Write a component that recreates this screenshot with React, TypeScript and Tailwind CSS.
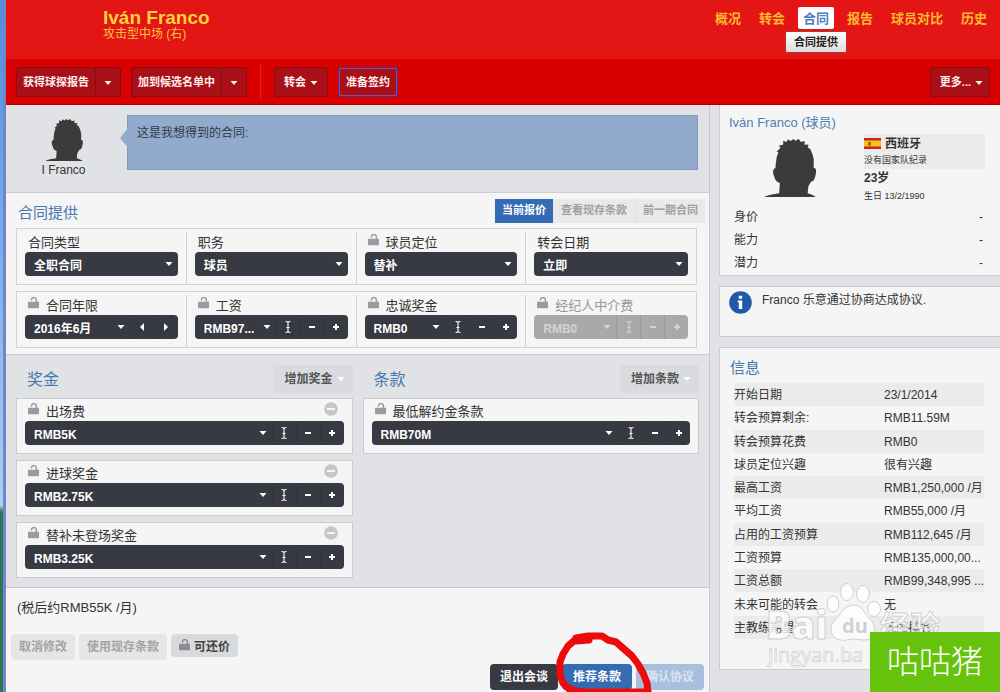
import { useId } from "react";
import type { ReactNode } from "react";
import clsx from "clsx";

const navItems = ["概况", "转会", "合同", "报告", "球员对比", "历史"];

const bonuses = [
  { label: "出场费", value: "RMB5K" },
  { label: "进球奖金", value: "RMB2.75K" },
  { label: "替补未登场奖金", value: "RMB3.25K" },
];

const ratings = ["身价", "能力", "潜力"];

const infoRows = [
  ["开始日期", "23/1/2014"],
  ["转会预算剩余:", "RMB11.59M"],
  ["转会预算花费", "RMB0"],
  ["球员定位兴趣", "很有兴趣"],
  ["最高工资", "RMB1,250,000 /月"],
  ["平均工资", "RMB55,000 /月"],
  ["占用的工资预算", "RMB112,645 /月"],
  ["工资预算", "RMB135,000,00..."],
  ["工资总额", "RMB99,348,995 ..."],
  ["未来可能的转会", "无"],
  ["主教练期望", "巩固排名"],
];

function Caret({ className }: { className?: string }) {
  return (
    <svg viewBox="0 0 8 4" className={clsx("h-1 w-2 shrink-0 fill-current", className)} aria-hidden="true">
      <path d="M0.5 0h7L4 4z" />
    </svg>
  );
}

function LockIcon({ className }: { className?: string }) {
  return (
    <svg viewBox="0 0 11 12" className={clsx("h-3 w-[11px] shrink-0", className)} aria-hidden="true">
      <path d="M0 4.8h11v5.6a.8.8 0 0 1-.8.8H.8a.8.8 0 0 1-.8-.8z" fill="currentColor" />
      <path d="M8.4 5.5V3.2a2.5 2.5 0 0 0-5-.2v.6" fill="none" stroke="currentColor" strokeWidth="1.5" />
    </svg>
  );
}

function Silhouette({ className }: { className?: string }) {
  return (
    <svg viewBox="0 0 152 171" className={className} fill="#3b3b3b" aria-hidden="true">
      <path d="M0 171C10 165 28 163 44 160L46 130C38 128 32 122 30 112C24 100 25 86 33 86C34 70 36 60 37 52L42 38L36 38L48 26L43 20L56 16L56 5L66 9L70 1L78 6L86 0L92 5L102 0L107 8L120 7L118 16L131 17L128 24L136 30L142 44L146 60L146 86C154 84 154 96 151 108C148 122 144 124 138 126L130 140L128 160C136 163 146 166 152 171Z" />
    </svg>
  );
}

function StepIcon({ kind }: { kind: string }) {
  return (
    <svg viewBox="0 0 12 14" className="h-3.5 w-3 fill-current" aria-hidden="true">
      {kind === "edit" && (
        <path d="M3.5 1.5q2 0 2.5 1q.5-1 2.5-1M6 2.5v9M3.5 12.5q2 0 2.5-1q.5 1 2.5 1M4.5 7.5h3" fill="none" stroke="currentColor" strokeWidth="1.1" />
      )}
      {kind === "minus" && <path d="M3 6h6v2H3z" />}
      {kind === "plus" && <path d="M3 6h2V4h2v2h2v2H7v2H5V8H3z" />}
      {kind === "prev" && <path d="M8 3v8L4 7z" />}
      {kind === "next" && <path d="M4 3v8l4-4z" />}
    </svg>
  );
}

const stepNames: Record<string, string> = {
  edit: "编辑",
  minus: "减少",
  plus: "增加",
  prev: "上一个",
  next: "下一个",
};

const moneySteps = ["edit", "minus", "plus"];

type FieldProps = {
  label: string;
  value: string;
  steps?: string[];
  locked?: boolean;
  disabled?: boolean;
  removable?: boolean;
};

function Field({ label, value, steps = [], locked, disabled, removable }: FieldProps) {
  const id = useId();

  return (
    <div className="min-w-0 px-2 pb-2">
      <div className="flex h-5 items-center gap-[7px] pl-[3px]">
        {locked && <LockIcon className="-mt-1 text-[#9b9b9d]" />}
        <label htmlFor={id} className={clsx("pt-0.5 text-[13px]", disabled ? "text-[#999]" : "text-[#333]")}>
          {label}
        </label>
        {removable && (
          <button type="button" aria-label={`删除${label}`} className="-mt-1 mr-1.5 ml-auto">
            <svg viewBox="0 0 14 14" className="size-3.5">
              <circle cx="7" cy="7" r="6.8" fill="#c6c6c7" />
              <path d="M3 6h8v2H3z" fill="#f5f5f5" />
            </svg>
          </button>
        )}
      </div>
      <div className={clsx("flex h-6 overflow-hidden rounded", disabled ? "bg-[#a9a9aa] text-[#d3d3d3]" : "bg-[#383a43] text-white")}>
        <div className="relative min-w-0 flex-1">
          <select id={id} disabled={disabled} className="h-full w-full appearance-none bg-transparent pt-1 pl-[9px] text-xs font-bold">
            <option>{value}</option>
          </select>
          <Caret className="pointer-events-none absolute top-2.5 right-[5px]" />
        </div>
        {steps.map((step) => (
          <button
            key={step}
            type="button"
            disabled={disabled}
            aria-label={`${stepNames[step]}${label}`}
            className={clsx("flex w-6 items-center justify-center border-l", disabled ? "border-[#9b9b9c]" : "border-[#33353d]")}
          >
            <StepIcon kind={step} />
          </button>
        ))}
      </div>
    </div>
  );
}

function FieldRow({ children }: { children: ReactNode }) {
  return <div className="grid grid-cols-4 divide-x divide-[#d2d2d4] border border-[#d2d2d4] pt-[3px]">{children}</div>;
}

function FieldCard({ children }: { children: ReactNode }) {
  return <div className="border border-[#cbcccf] bg-[#f5f5f5] pt-0.5">{children}</div>;
}

function SectionHeader({ title, action }: { title: string; action: string }) {
  return (
    <div className="flex h-[43px] items-center justify-between pt-1 pl-[11px]">
      <h2 className="pt-0.5 text-base text-[#4577ae]">{title}</h2>
      <button type="button" className="flex h-7 items-center gap-1 rounded bg-[#d9dbde] pr-2 pl-[11px] text-xs font-bold text-[#555]">
        {action}
        <Caret className="text-white" />
      </button>
    </div>
  );
}

function Header() {
  return (
    <header className="flex h-[59px] items-start justify-between bg-[#e31515] pr-2 pl-[97px]">
      <div className="pt-2 text-[#ffd23a]">
        <h1 className="text-[19px] leading-5 font-bold">Iván Franco</h1>
        <p className="text-xs leading-3 text-[#ffc23a]">攻击型中场 (右)</p>
      </div>
      <nav className="pt-[7px]">
        <ul className="flex gap-2 text-[13px] font-bold text-[#ffb92e]">
          {navItems.map((item) => (
            <li key={item} className="relative">
              <a
                href="#"
                className={clsx("flex h-[22px] items-center px-[5px] pt-0.5", item === "合同" && "rounded-xs bg-white text-[#4a7fc0]")}
              >
                {item}
              </a>
              {item === "合同" && (
                <a
                  href="#"
                  className="absolute top-6 left-1/2 flex h-[22px] -translate-x-1/2 items-center rounded-xs border border-[#b33] bg-linear-to-b from-white to-[#dcdcdc] px-2 text-[11px] whitespace-nowrap text-[#222]"
                >
                  合同提供
                </a>
              )}
            </li>
          ))}
        </ul>
      </nav>
    </header>
  );
}

function SplitButton({ label }: { label: string }) {
  return (
    <div className="flex h-[30px] rounded-xs border border-[#8f0a10] bg-[#a80f16]">
      <button type="button" className="px-1.5 pt-0.5">{label}</button>
      <button type="button" aria-label={`${label}选项`} className="flex w-[25px] items-center justify-center border-l border-[#8f0a10] pt-0.5">
        <Caret />
      </button>
    </div>
  );
}

function Toolbar() {
  const button = "flex h-[30px] items-center gap-1 rounded-xs border bg-[#a80f16] pt-0.5";

  return (
    <div className="flex h-[46px] items-center border-b border-[#b50000] bg-[#d90000] px-2.5 text-[11px] font-bold text-[#fff0f0]">
      <div className="flex gap-2.5">
        <SplitButton label="获得球探报告" />
        <SplitButton label="加到候选名单中" />
      </div>
      <div className="mx-[13px] h-9 border-l border-[#e52020]" />
      <div className="flex gap-2.5">
        <button type="button" className={clsx(button, "border-[#8f0a10] px-[9px]")}>
          转会
          <Caret />
        </button>
        <button type="button" className={clsx(button, "border-[#5c2a86] px-[7px] ring-1 ring-[#8a4a96] ring-inset")}>
          准备签约
        </button>
      </div>
      <button type="button" className={clsx(button, "ml-auto border-[#8f0a10] pr-1.5 pl-[9px]")}>
        更多...
        <Caret />
      </button>
    </div>
  );
}

function Message() {
  return (
    <section className="flex h-[87px] items-start pt-2.5 pr-[11px]">
      <figure className="flex w-[115px] flex-col items-center pt-1">
        <Silhouette className="h-[42px] w-[38px]" />
        <figcaption className="pt-0.5 text-xs leading-3.5 text-[#333]">I Franco</figcaption>
      </figure>
      <div className="relative ml-1.5 h-[55px] flex-1 border border-[#8499ba] bg-[#92aacc]">
        <svg viewBox="0 0 8 20" className="absolute top-3 -left-2 h-5 w-2" fill="#92aacc" aria-hidden="true">
          <path d="M8 0v20L0 10z" />
        </svg>
        <p className="px-[9px] pt-2 text-xs leading-[18px] text-[#2f3a48]">这是我想得到的合同:</p>
      </div>
    </section>
  );
}

function ContractOffer() {
  return (
    <section className="border-y border-[#cdced1] bg-[#f5f5f5] pr-3 pb-1.5 pl-2.5">
      <div className="-mr-2 flex h-[35px] items-center justify-between">
        <h2 className="pt-1.5 pl-0.5 text-[15px] text-[#4577ae]">合同提供</h2>
        <div className="flex h-6 text-[11px] font-bold">
          <button type="button" className="bg-[#346cb4] px-[7px] text-white">当前报价</button>
          <button type="button" className="bg-[#e9e9ea] px-2 text-[#a0a0a2]">查看现存条款</button>
          <button type="button" className="border-l border-[#dfdfe1] bg-[#e9e9ea] px-[7px] text-[#a0a0a2]">前一期合同</button>
        </div>
      </div>
      <div className="flex flex-col gap-1.5">
        <FieldRow>
          <Field label="合同类型" value="全职合同" />
          <Field label="职务" value="球员" />
          <Field label="球员定位" value="替补" locked />
          <Field label="转会日期" value="立即" />
        </FieldRow>
        <FieldRow>
          <Field label="合同年限" value="2016年6月" steps={["prev", "next"]} locked />
          <Field label="工资" value="RMB97..." steps={moneySteps} locked />
          <Field label="忠诚奖金" value="RMB0" steps={moneySteps} locked />
          <Field label="经纪人中介费" value="RMB0" steps={moneySteps} locked disabled />
        </FieldRow>
      </div>
    </section>
  );
}

function Clauses() {
  return (
    <section className="grid grid-cols-2 gap-2.5 pr-2.5 pb-[9px] pl-2.5">
      <div>
        <SectionHeader title="奖金" action="增加奖金" />
        <div className="flex flex-col gap-1.5">
          {bonuses.map((bonus) => (
            <FieldCard key={bonus.label}>
              <Field {...bonus} steps={moneySteps} locked removable />
            </FieldCard>
          ))}
        </div>
      </div>
      <div>
        <SectionHeader title="条款" action="增加条款" />
        <FieldCard>
          <Field label="最低解约金条款" value="RMB70M" steps={moneySteps} locked />
        </FieldCard>
      </div>
    </section>
  );
}

function OfferActions() {
  return (
    <footer className="flex flex-1 flex-col border-t border-[#c9cacd] bg-[#f5f5f5] px-[5px] pt-2.5 pb-0.5">
      <p className="pl-1.5 text-[13px] leading-5 text-[#333]">(税后约RMB55K /月)</p>
      <div className="flex items-start gap-1 pt-4 text-xs font-bold text-[#a3a3a6]">
        <button type="button" className="h-[26px] rounded bg-[#e6e6e7] px-2">取消修改</button>
        <button type="button" className="h-[26px] rounded bg-[#e6e6e7] px-2">使用现存条款</button>
        <button type="button" className="flex h-[23px] items-center gap-1 rounded bg-[#d9dadd] px-2 text-[#444]">
          <LockIcon className="-mt-0.5 text-[#8d8d90]" />
          <span className="pt-0.5">可还价</span>
        </button>
      </div>
      <div className="mt-auto flex justify-end gap-1 text-xs font-bold text-white">
        <button type="button" className="h-[26px] rounded bg-[#383a43] px-2.5">退出会谈</button>
        <div className="relative z-10">
          <button type="button" className="h-[26px] rounded bg-[#346cb4] px-[11px]">推荐条款</button>
          <svg viewBox="0 0 98 61" className="pointer-events-none absolute -top-8 -left-1.5 h-[61px] w-[98px]" fill="none" stroke="#ec0a0a" strokeWidth="7" strokeLinecap="round" strokeLinejoin="round" aria-hidden="true">
            <path d="M33 8L20 9L20 6L32 4L46 4L52 8L60 10L68 17L76 24L82 32L87 41L91 51L92 61" />
            <path d="M19 8L12 14L7 22L4 30L4 43L7 51L13 57L24 60L92 60" />
          </svg>
        </div>
        <button type="button" className="h-[26px] rounded bg-[#a9bfde] px-2.5 text-[#dbe5f3]">确认协议</button>
      </div>
    </footer>
  );
}

function Flag() {
  return (
    <svg viewBox="0 0 17 11" className="h-[11px] w-[17px]" aria-hidden="true">
      <path d="M0 0h17v11H0z" fill="#c8281c" />
      <path d="M0 2.5h17v6H0z" fill="#f8c21c" />
      <path d="M4 4h3v3.5H4z" fill="#b5571c" />
    </svg>
  );
}

function PlayerCard() {
  return (
    <section className="border-b border-l border-[#cbcccf] bg-[#f5f5f5] pt-2 pr-[15px] pb-px pl-[9px]">
      <h2 className="text-[13px] leading-5 text-[#4c7db4]">Iván Franco (球员)</h2>
      <div className="flex pt-px">
        <div className="flex-1 pt-[5px] pl-[35px]">
          <Silhouette className="h-[58px] w-[52px]" />
        </div>
        <div className="w-[121px] text-[#333]">
          <div className="bg-[#ebebeb]">
            <p className="flex h-[18px] items-center gap-1 pt-px text-xs font-bold">
              <Flag />
              西班牙
            </p>
            <p className="text-[9px] leading-[17px]">没有国家队纪录</p>
          </div>
          <p className="text-xs leading-[19px] font-bold">23岁</p>
          <p className="text-[9px] leading-[17px]">生日 13/2/1990</p>
        </div>
      </div>
      <table className="w-full text-xs text-[#333]">
        <tbody>
          {ratings.map((rating) => (
            <tr key={rating} className="h-[23px]">
              <th scope="row" className="pl-[5px] text-left font-normal">{rating}</th>
              <td className="pr-0.5 text-right">-</td>
            </tr>
          ))}
        </tbody>
      </table>
    </section>
  );
}

function Notice() {
  return (
    <section className="flex h-[51px] gap-2.5 border-y border-l border-[#cbcccf] bg-[#f5f5f5] pt-1 pl-[9px]">
      <svg viewBox="0 0 23 23" className="size-[23px] shrink-0" aria-hidden="true">
        <circle cx="11.5" cy="11.5" r="11.3" fill="#2159a9" />
        <path d="M9.8 4.8h3.4v3H9.8zM8.8 9.5h4.4V18h-3.4v-6.5h-1z" fill="#fff" />
      </svg>
      <p className="text-xs leading-[18px] text-[#333]">Franco 乐意通过协商达成协议.</p>
    </section>
  );
}

function InfoPanel() {
  return (
    <section className="relative border-y border-l border-[#cbcccf] bg-[#f5f5f5] pt-2 pr-4 pb-[30px] pl-3.5">
      <h2 className="-ml-1 text-[15px] leading-6 text-[#4577ae]">信息</h2>
      <table className="mt-[3px] h-64 w-full table-fixed text-xs text-[#333]">
        <tbody>
          {infoRows.map(([name, value]) => (
            <tr key={name} className="odd:bg-[#ebebeb]">
              <th scope="row" className="w-3/5 pt-px text-left font-normal">{name}</th>
              <td className="pt-px whitespace-nowrap">{value}</td>
            </tr>
          ))}
        </tbody>
      </table>
      <Watermark />
    </section>
  );
}

function Watermark() {
  return (
    <svg
      viewBox="0 0 180 90"
      className="pointer-events-none absolute -bottom-1 left-[46px] h-[90px] w-[180px] font-['Open_Sans','Noto_Sans_CJK_SC',sans-serif]"
      fill="#ffffff"
      fillOpacity="0.8"
      stroke="#cfcfcf"
      strokeWidth="1"
      aria-hidden="true"
    >
      <text x="0" y="56" fontSize="38" fontWeight="800">Bai</text>
      <ellipse cx="67" cy="21" rx="6" ry="8" />
      <ellipse cx="81" cy="9" rx="6.5" ry="8.5" />
      <ellipse cx="97" cy="11" rx="6.5" ry="8.5" />
      <ellipse cx="108" cy="26" rx="6.5" ry="7.5" />
      <path d="M88 22c8 0 10 8 16 14c7 7 7 21-5 21c-5 0-8-1-12-1s-7 2-12 1c-11-1-13-13-6-20c6-6 9-15 19-15z" />
      <text x="76" y="50" fontSize="20" fontWeight="700" fill="#c4c4c4" stroke="none">du</text>
      <text x="114" y="54" fontSize="30" fontWeight="700">经验</text>
      <text x="2" y="79" fontSize="20" strokeWidth="0.7">jingyan.ba</text>
    </svg>
  );
}

export default function App() {
  return (
    <div className="relative flex min-h-screen overflow-hidden bg-[#e0e2e5] font-['Liberation_Sans','Noto_Sans_CJK_SC',sans-serif]">
      <div className="w-1.5 shrink-0 border-r-3 border-[#7383cc] bg-linear-to-b from-[#4a8fe0] from-0% via-[#a8d0f0] via-73% to-[#2f7550] to-74%" />
      <div className="flex min-w-0 flex-1 flex-col">
        <Header />
        <Toolbar />
        <div className="flex flex-1">
          <main className="flex min-w-0 flex-1 flex-col border-r border-[#c6c8cb]">
            <Message />
            <ContractOffer />
            <Clauses />
            <OfferActions />
          </main>
          <aside className="flex w-[290px] shrink-0 flex-col gap-2.5 pl-[9px]">
            <PlayerCard />
            <Notice />
            <InfoPanel />
          </aside>
        </div>
      </div>
      <div className="absolute right-0 bottom-0 flex h-[60px] w-[130px] items-center justify-center bg-[#66c30d] text-[32px] font-light text-white">
        咕咕猪
      </div>
    </div>
  );
}
